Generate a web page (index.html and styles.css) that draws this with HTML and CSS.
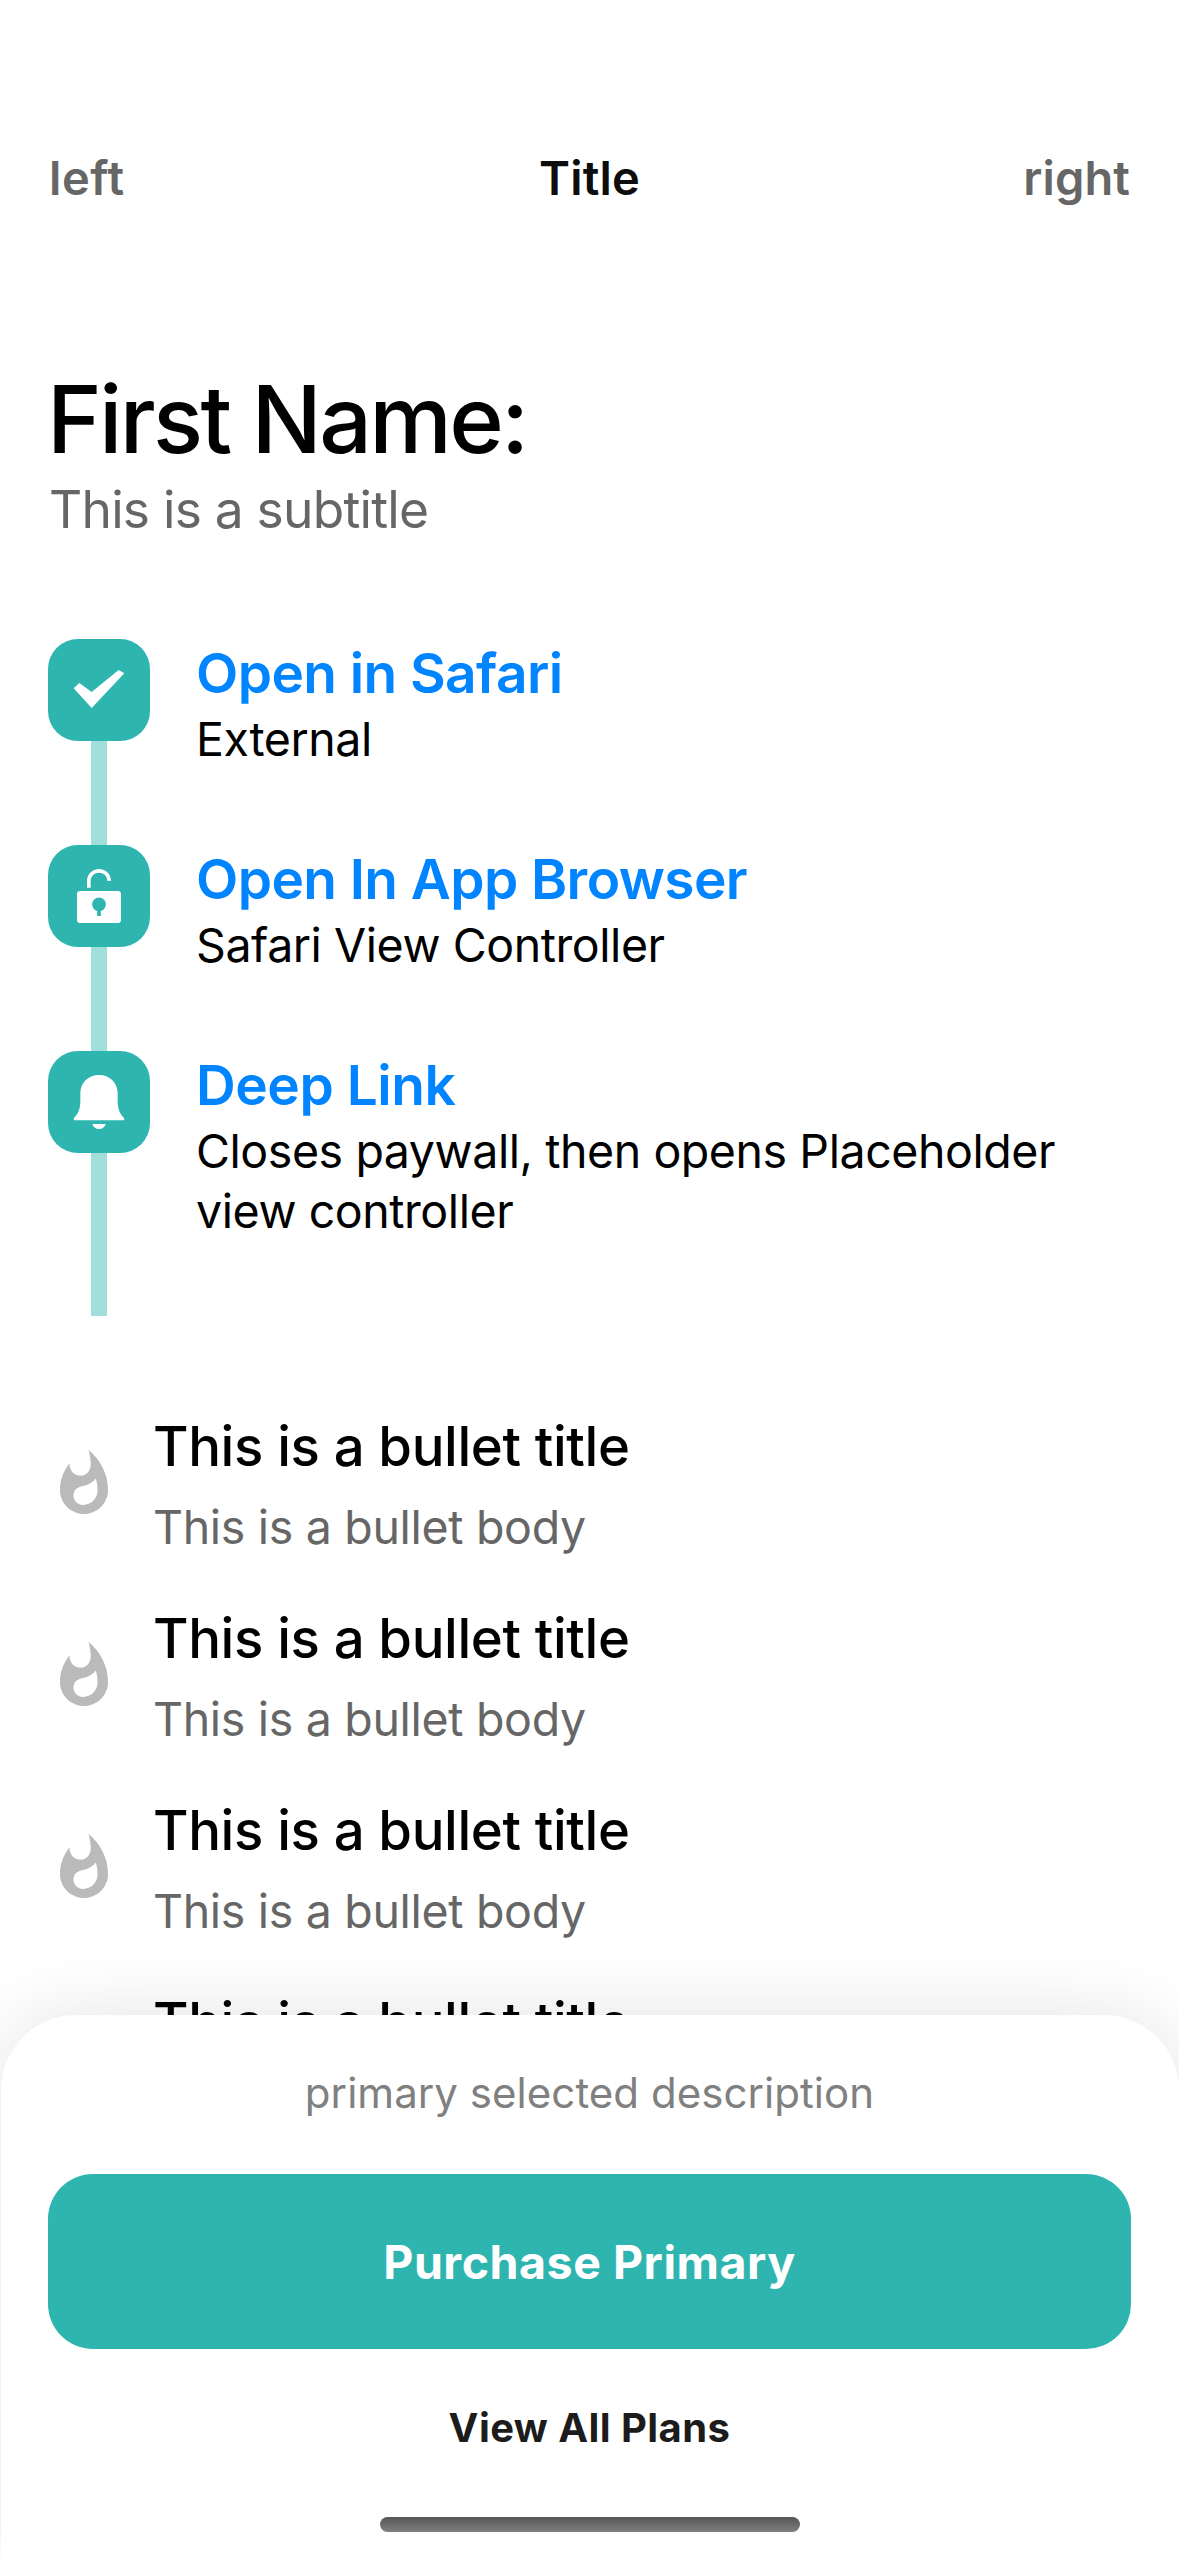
FILE: index.html
```
<!DOCTYPE html>
<html lang="en">
<head>
<meta charset="utf-8">
<title>Paywall</title>
<link rel="stylesheet" href="styles.css">
</head>
<body>
<header class="navbar">
  <span class="nav-left">left</span>
  <span class="nav-title">Title</span>
  <span class="nav-right">right</span>
</header>
<main class="content">
  <h1 class="heading">First Name:</h1>
  <p class="subtitle">This is a subtitle</p>

  <ol class="timeline">
    <li class="step">
      <div class="rail">
        <svg class="tile" viewBox="0 0 306 306"><path fill="#fff" d="M77 148L94 132L131 159L212 93L229 103L131 207Z"/></svg>
      </div>
      <div class="step-text">
        <a class="step-title">Open in Safari</a>
        <p class="step-body">External</p>
      </div>
    </li>
    <li class="step">
      <div class="rail">
        <svg class="tile" viewBox="0 0 306 306">
          <path fill="none" stroke="#fff" stroke-width="11" d="M122.5 128V108A30.5 30.5 0 0 1 183.5 108"/>
          <rect x="87" y="138" width="132" height="96" rx="10" fill="#fff"/>
          <circle class="keyhole" cx="153" cy="178" r="20.5"/>
          <rect class="keyhole" x="147.5" y="190" width="11" height="23"/>
        </svg>
      </div>
      <div class="step-text">
        <a class="step-title">Open In App Browser</a>
        <p class="step-body">Safari View Controller</p>
      </div>
    </li>
    <li class="step step-last">
      <div class="rail">
        <svg class="tile" viewBox="0 0 306 306">
          <path fill="#fff" d="M97 127C97 94 122 72 153 72S209 94 209 127V150C209 175 217 190 228 201Q231 208 224 208H82Q75 208 78 201C89 190 97 175 97 150Z"/>
          <path fill="#fff" d="M133 219H173C170 229 162 234 153 234S136 229 133 219Z"/>
        </svg>
      </div>
      <div class="step-text">
        <a class="step-title">Deep Link</a>
        <p class="step-body">Closes paywall, then opens Placeholder view controller</p>
      </div>
    </li>
  </ol>

  <svg width="0" height="0" class="defs">
    <symbol id="flame" viewBox="0 0 24 24"><path d="M13.5.67s.74 2.65.74 4.8c0 2.06-1.35 3.73-3.41 3.73-2.07 0-3.63-1.67-3.63-3.73l.03-.36C5.21 7.51 4 10.62 4 14c0 4.42 3.58 8 8 8s8-3.58 8-8C20 8.61 17.41 3.8 13.5.67zM11.71 19c-1.78 0-3.22-1.4-3.22-3.14 0-1.62 1.05-2.76 2.81-3.12 1.77-.36 3.6-1.21 4.62-2.58.39 1.29.59 2.65.59 4.04 0 2.65-2.15 4.8-4.8 4.8z"/></symbol>
  </svg>
  <ul class="bullets">
    <li class="bullet"><svg class="flame"><use href="#flame"/></svg><div><p class="bullet-title">This is a bullet title</p><p class="bullet-body">This is a bullet body</p></div></li>
    <li class="bullet"><svg class="flame"><use href="#flame"/></svg><div><p class="bullet-title">This is a bullet title</p><p class="bullet-body">This is a bullet body</p></div></li>
    <li class="bullet"><svg class="flame"><use href="#flame"/></svg><div><p class="bullet-title">This is a bullet title</p><p class="bullet-body">This is a bullet body</p></div></li>
    <li class="bullet bullet-last"><div class="flame"></div><div><p class="bullet-title">This is a bullet title</p></div></li>
  </ul>
</main>
<footer class="sheet">
  <p class="description">primary selected description</p>
  <button class="purchase">Purchase Primary</button>
  <a class="plans">View All Plans</a>
  <div class="home-bar"></div>
</footer>
</body>
</html>
```
FILE: styles.css
```
* { box-sizing: border-box; margin: 0; padding: 0; }

body {
  position: relative;
  height: 2556px;
  overflow: hidden;
  background: #fff;
  color: #000;
  font-family: Inter, "Liberation Sans", sans-serif;
}

ol, ul { list-style: none; }

.navbar {
  display: grid;
  grid-template-columns: 1fr auto 1fr;
  padding: 148px 49px 0;
  font-size: 47px;
  font-weight: 600;
  line-height: 60px;
}
.nav-left { color: #666; letter-spacing: 0.6px; }
.nav-title { color: #0d0d0d; letter-spacing: 0.17px; }
.nav-right { color: #666; letter-spacing: 0.1px; text-align: right; }

.content { padding: 153px 48px 0; }

.heading {
  margin-left: -1px;
  font-size: 93px;
  font-weight: 500;
  line-height: 116px;
  letter-spacing: -2.7px;
}
.subtitle {
  margin: 1px 0 0 1px;
  color: #666;
  font-size: 51.5px;
  line-height: 62px;
  letter-spacing: -0.78px;
}

.timeline { margin-top: 99px; }
.step { display: flex; gap: 46px; }
.rail {
  width: 102px;
  background: linear-gradient(#a0dfda, #a0dfda) 43px 0 / 16px 100% no-repeat;
}
.tile {
  display: block;
  width: 102px;
  height: 102px;
  border-radius: 30px;
  background: #2fb5af;
}
.keyhole { fill: #2fb5af; }
.step-text { flex: 1; padding: 1px 0 76px; }
.step-last .step-text { padding-bottom: 75px; }
.step-title {
  display: block;
  color: #0084ff;
  font-size: 55px;
  font-weight: 600;
  line-height: 66px;
  letter-spacing: -0.58px;
}
.step-last .step-title { letter-spacing: -0.45px; }
.step-body {
  margin-top: 3px;
  font-size: 46.5px;
  line-height: 60px;
  letter-spacing: -0.43px;
}

.defs { display: block; }
.bullets { display: flex; flex-direction: column; gap: 48px; margin-top: 96px; }
.bullet { display: flex; align-items: center; gap: 33px; }
.bullet-last { align-items: flex-start; }
.flame { width: 72px; height: 72px; fill: #bababa; flex: none; }
.bullet-title {
  padding-top: 1px;
  font-size: 54.5px;
  font-weight: 500;
  line-height: 66px;
  letter-spacing: -0.37px;
}
.bullet-body {
  margin-top: 19px;
  color: #666;
  font-size: 46.5px;
  line-height: 58px;
  letter-spacing: -0.32px;
}

.sheet {
  position: absolute;
  left: 1px;
  right: 0;
  bottom: 0;
  height: 541px;
  display: flex;
  flex-direction: column;
  align-items: center;
  padding: 53px 48px 0 47px;
  border-radius: 75px 75px 0 0;
  background: #fff;
  box-shadow: 0 0 75px rgba(0, 0, 0, 0.11);
}
.description {
  color: #808080;
  font-size: 42px;
  line-height: 50px;
  letter-spacing: 0.05px;
}
.purchase {
  align-self: stretch;
  height: 175px;
  margin-top: 56px;
  border: 0;
  border-radius: 45px;
  background: #2fb5af;
  color: #fff;
  font: 700 46.5px/60px Inter, "Liberation Sans", sans-serif;
  letter-spacing: 0.53px;
}
.plans {
  margin-top: 54px;
  color: #1c1c1c;
  font-size: 40px;
  font-weight: 700;
  line-height: 50px;
  letter-spacing: 0.43px;
}
.home-bar {
  width: 420px;
  height: 15px;
  margin-top: 64px;
  border-radius: 8px;
  background: linear-gradient(#555, #808080);
}
```
